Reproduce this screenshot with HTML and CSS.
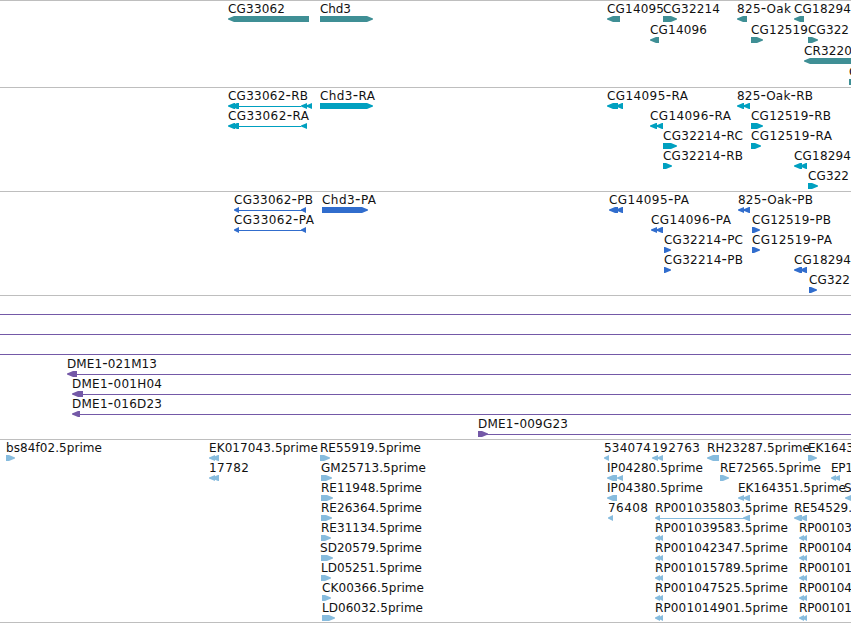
FILE: index.html
```
<!DOCTYPE html>
<html lang="en">
<head>
    <meta charset="UTF-8">
    <meta name="viewport" content="width=device-width, initial-scale=1.0">
    <title>Genome Browser</title>
    <link rel="stylesheet" href="styles.css">
</head>
<body>
    <div class="browser" id="browser">
        <div class="track gene" id="gene"></div>
        <div class="track transcript" id="transcript"></div>
        <div class="track protein" id="protein"></div>
        <div class="track bac" id="bac"></div>
        <div class="track est" id="est"></div>
    </div>
    <script src="tracks.js"></script>
</body>
</html>
```

FILE: styles.css
```
body {
    margin: 0;
    background-color: #fff;
    overflow: hidden;
}

.browser {
    width: 851px;
    display: flex;
    flex-direction: column;
    border-bottom: 1px solid #bebebe;
}

.track {
    box-sizing: border-box;
    border-top: 1px solid #bebebe;
    overflow: hidden;
}

.track svg {
    display: block;
    width: 100%;
    height: 100%;
}

.track text {
    font-family: "DejaVu Sans", sans-serif;
    font-size: 12px;
    fill: #111;
}

.track .dash {
    font-size: 15px;
}

.track rect {
    shape-rendering: crispEdges;
}

.gene {
    height: 87px;
    color: #3f8f95;
}

.transcript {
    height: 104px;
    color: #00a0c0;
}

.protein {
    height: 104px;
    color: #316dcd;
}

.bac {
    height: 144px;
    color: #7459a7;
}

.est {
    height: 183px;
    color: #87bcde;
}
```

FILE: tracks.js
```
// [row, label, label x, label width, shapes]
// shapes: l = points left, r = points right, t = thin line, each followed by start-end
const tracks = {
    gene: { pitch: 21, features: [
        [0, 'CG33062', 228, 57, 'l228-309'],
        [0, 'Chd3', 320, 31, 'r320-373'],
        [0, 'CG14095', 607, 57, 'l607-620'],
        [0, 'CG32214', 663, 57, 'r663-677'],
        [0, '825-Oak', 737, 54, 'l737-747'],
        [0, 'CG18294', 794, 57, 'l794-804'],
        [1, 'CG14096', 650, 57, 'l650-659'],
        [1, 'CG12519', 751, 57, 'r751-763'],
        [1, 'CG322', 808, 41, 'r808-818'],
        [2, 'CR3220', 804, 48, 'l804-860'],
        [3, 'CG', 849, 17, 'r849-870']
    ] },
    transcript: { pitch: 20, features: [
        [0, 'CG33062-RB', 228, 80, 'l228-235 l231-239 t239-301 l301-307 l306-312'],
        [0, 'Chd3-RA', 320, 55, 'r320-373'],
        [0, 'CG14095-RA', 607, 81, 'l607-618 l616-623'],
        [0, '825-Oak-RB', 737, 76, 'l737-744 l743-750'],
        [1, 'CG33062-RA', 228, 81, 'l228-235 l231-239 t239-301 l301-307'],
        [1, 'CG14096-RA', 650, 81, 'l650-657 l656-663'],
        [1, 'CG12519-RB', 751, 80, 'r751-763'],
        [2, 'CG32214-RC', 663, 80, 'r663-677'],
        [2, 'CG12519-RA', 751, 81, 'r751-761'],
        [3, 'CG32214-RB', 663, 80, 'r663-672'],
        [3, 'CG18294', 794, 57, 'l794-802 l800-807'],
        [4, 'CG322', 808, 41, 'r808-818']
    ] },
    protein: { pitch: 20, features: [
        [0, 'CG33062-PB', 234, 79, 't235-305 l234-239 l301-306'],
        [0, 'Chd3-PA', 322, 54, 'r322-368'],
        [0, 'CG14095-PA', 609, 80, 'l609-618 l616-623'],
        [0, '825-Oak-PB', 738, 75, 'l738-744 l743-750'],
        [1, 'CG33062-PA', 234, 80, 't235-305 l234-239 l301-306'],
        [1, 'CG14096-PA', 651, 80, 'l651-657 l656-663'],
        [1, 'CG12519-PB', 752, 79, 'r752-760'],
        [2, 'CG32214-PC', 664, 79, 'r664-671'],
        [2, 'CG12519-PA', 752, 80, 'r752-760'],
        [3, 'CG32214-PB', 664, 79, 'r664-671'],
        [3, 'CG18294', 794, 57, 'l794-802 l800-807'],
        [4, 'CG322', 809, 41, 'r809-817']
    ] },
    bac: { pitch: 20, features: [
        [0, '', 0, 0, 't0-851'],
        [1, '', 0, 0, 't0-851'],
        [2, '', 0, 0, 't0-851'],
        [3, 'DME1-021M13', 67, 90, 'l67-77 t77-851'],
        [4, 'DME1-001H04', 72, 90, 'l72-83 t83-851'],
        [5, 'DME1-016D23', 72, 90, 'l72-80 t80-851'],
        [6, 'DME1-009G23', 478, 90, 'r478-488 t486-851']
    ] },
    est: { pitch: 20, features: [
        [0, 'bs84f02.5prime', 6, 96, 'r6-15'],
        [0, 'EK017043.5prime', 209, 109, 'l209-215 l212-219'],
        [0, 'RE55919.5prime', 320, 101, 'r320-330'],
        [0, '534074', 604, 47, 'l604-609'],
        [0, '192763', 652, 48, 'l652-658 l657-663'],
        [0, 'RH23287.5prime', 707, 103, 'l707-719'],
        [0, 'EK1643', 808, 46, 'r808-817'],
        [1, '17782', 209, 40, 'l209-215 l212-219'],
        [1, 'GM25713.5prime', 321, 105, 'r321-332'],
        [1, 'IP04280.5prime', 607, 96, 'l607-617 l617-623'],
        [1, 'RE72565.5prime', 720, 101, 'r720-729'],
        [1, 'EP1', 831, 22, 'l831-836 l834-840'],
        [2, 'RE11948.5prime', 321, 101, 'r321-333'],
        [2, 'IP04380.5prime', 607, 96, 'l607-617'],
        [2, 'EK164351.5prime', 738, 108, 'l738-744 l743-750'],
        [2, 'S', 844, 8, 'l845-856'],
        [3, 'RE26364.5prime', 321, 101, 'r321-332'],
        [3, '76408', 608, 40, 'l608-613'],
        [3, 'RP001035803.5prime', 655, 133, 'l655-660 t659-744 l743-750'],
        [3, 'RE54529.', 794, 58, 'l794-802 l800-807'],
        [4, 'RE31134.5prime', 321, 101, 'r321-331'],
        [4, 'RP001039583.5prime', 655, 133, 'l655-660 l658-663'],
        [4, 'RP00103', 799, 53, 'l799-804 l802-807'],
        [5, 'SD20579.5prime', 320, 102, 'r321-333'],
        [5, 'RP001042347.5prime', 655, 133, 'l655-660 l658-663'],
        [5, 'RP00104', 799, 53, 'l799-804 l802-807'],
        [6, 'LD05251.5prime', 321, 101, 'r321-331'],
        [6, 'RP001015789.5prime', 655, 133, 'l655-660 l658-663'],
        [6, 'RP00101', 799, 53, 'l799-804 l802-807'],
        [7, 'CK00366.5prime', 322, 102, 'r322-331'],
        [7, 'RP001047525.5prime', 655, 133, 'l655-660 l658-663'],
        [7, 'RP00104', 799, 53, 'l799-804 l802-807'],
        [8, 'LD06032.5prime', 322, 101, 'r322-335'],
        [8, 'RP001014901.5prime', 655, 133, 'l655-660 l658-663'],
        [8, 'RP00101', 799, 53, 'l799-804 l802-807']
    ] }
};

function drawShape(shape, y) {
    const [start, end] = shape.slice(1).split('-').map(Number);
    if (shape[0] === 't') {
        return `<rect x="${start}" y="${y + 3}" width="${end - start}" height="1" fill="currentColor"/>`;
    }
    // the head takes up at most 6px of the box and has a slightly blunt tip
    const head = Math.min(6, end - start);
    const tip = shape[0] === 'l' ? start : end;
    const neck = shape[0] === 'l' ? start + head : end - head;
    const back = shape[0] === 'l' ? end : start;
    return `<path d="M${tip} ${y + 2.5}L${neck} ${y}H${back}V${y + 6}H${neck}L${tip} ${y + 3.5}Z" fill="currentColor"/>`;
}

for (const [id, track] of Object.entries(tracks)) {
    let svg = '<svg>';
    for (const [row, label, x, width, shapes] of track.features) {
        const top = row * track.pitch;
        svg += shapes.split(' ').map(s => drawShape(s, top + 15)).join('');
        if (label) {
            const text = label.replace(/-/g, '<tspan class="dash">-</tspan>');
            svg += `<text x="${x}" y="${top + 12}" textLength="${width}">${text}</text>`;
        }
    }
    document.getElementById(id).innerHTML = svg + '</svg>';
}
```
